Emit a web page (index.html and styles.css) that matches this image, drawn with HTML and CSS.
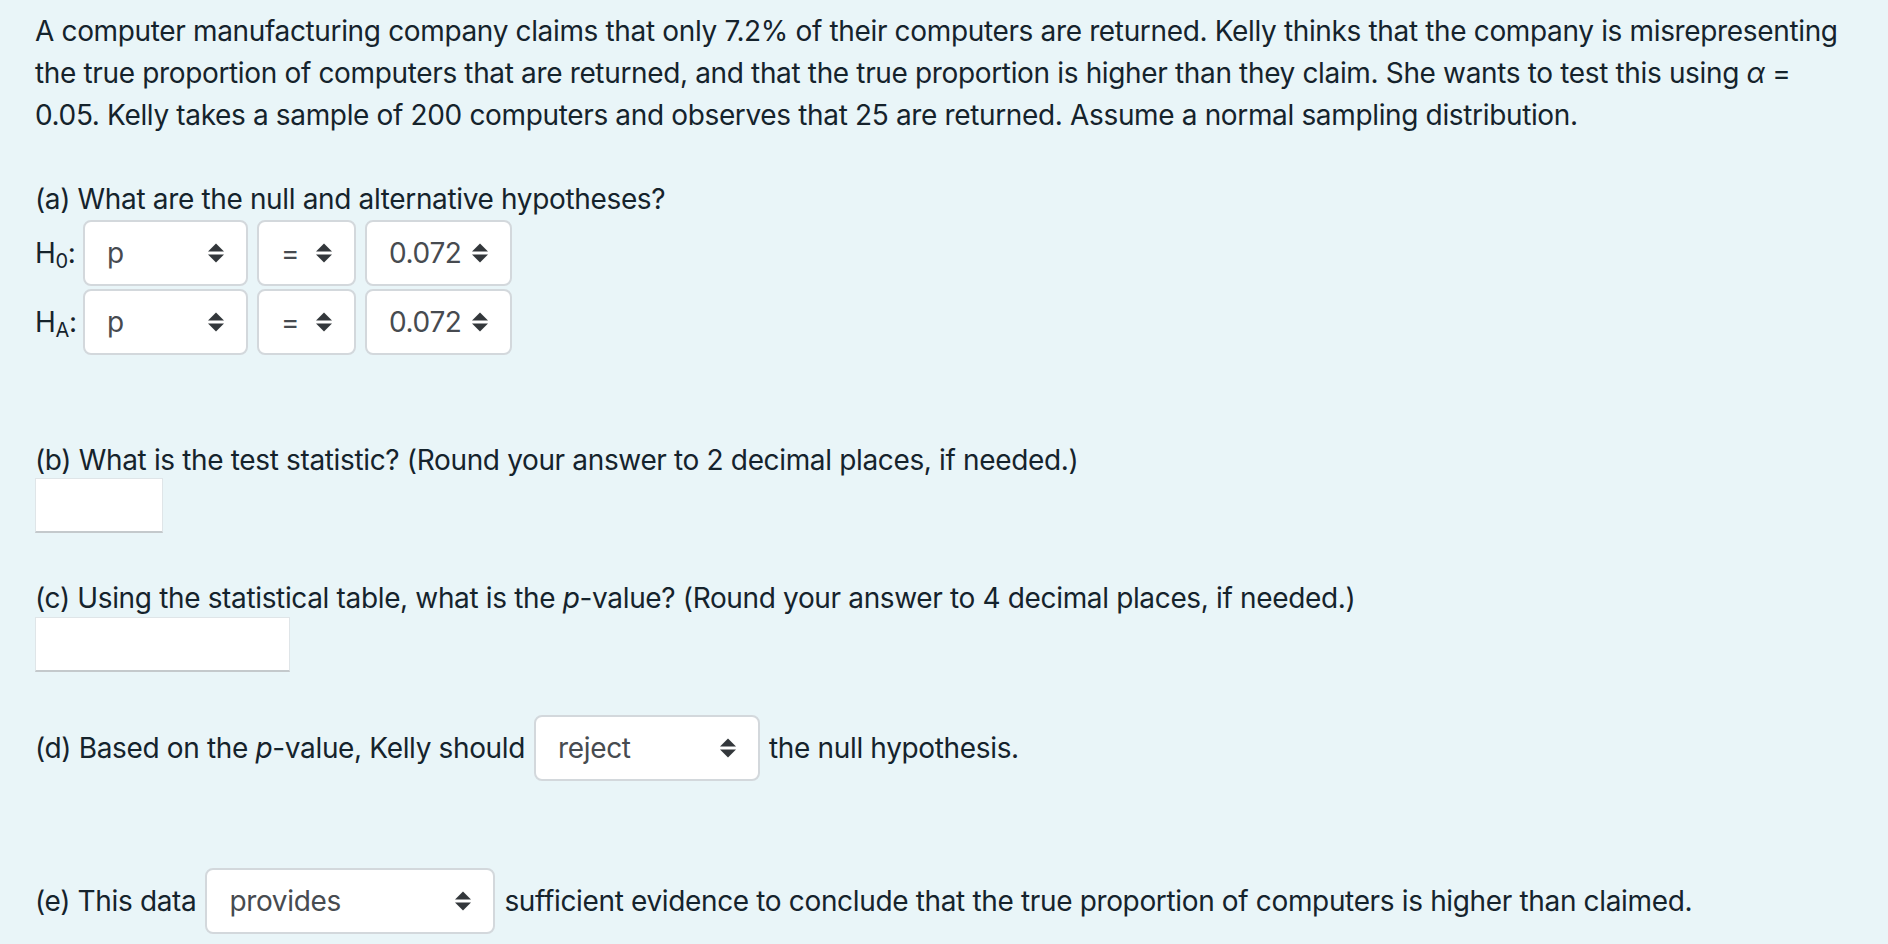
FILE: index.html
```html
<!DOCTYPE html>
<html lang="en">
<head>
<meta charset="utf-8">
<title>Hypothesis test question</title>
<link rel="stylesheet" href="styles.css">
</head>
<body>
<main class="page">
  <p class="intro">A computer manufacturing company claims that only 7.2% of their computers are returned. Kelly thinks that the company is misrepresenting<br>the true proportion of computers that are returned, and that the true proportion is higher than they claim. She wants to test this using <i class="alpha">α</i> =<br>0.05. Kelly takes a sample of 200 computers and observes that 25 are returned. Assume a normal sampling distribution.</p>

  <section class="part part-a">
    <p class="question">(a) What are the null and alternative hypotheses?</p>
    <div class="hyp-row">
      <span class="hyp-label">H<sub>0</sub>:</span>
      <div class="sel sel-var"><span class="sel-text">p</span><svg class="arrows" viewBox="0 0 16 20" width="16" height="20"><path d="M0 8.5 L8 0.5 L16 8.5 Z M0 11.5 L16 11.5 L8 19.5 Z"/></svg></div>
      <div class="sel sel-op"><span class="sel-text">=</span><svg class="arrows" viewBox="0 0 16 20" width="16" height="20"><path d="M0 8.5 L8 0.5 L16 8.5 Z M0 11.5 L16 11.5 L8 19.5 Z"/></svg></div>
      <div class="sel sel-val"><span class="sel-text">0.072</span><svg class="arrows" viewBox="0 0 16 20" width="16" height="20"><path d="M0 8.5 L8 0.5 L16 8.5 Z M0 11.5 L16 11.5 L8 19.5 Z"/></svg></div>
    </div>
    <div class="hyp-row">
      <span class="hyp-label">H<sub>A</sub>:</span>
      <div class="sel sel-var"><span class="sel-text">p</span><svg class="arrows" viewBox="0 0 16 20" width="16" height="20"><path d="M0 8.5 L8 0.5 L16 8.5 Z M0 11.5 L16 11.5 L8 19.5 Z"/></svg></div>
      <div class="sel sel-op"><span class="sel-text">=</span><svg class="arrows" viewBox="0 0 16 20" width="16" height="20"><path d="M0 8.5 L8 0.5 L16 8.5 Z M0 11.5 L16 11.5 L8 19.5 Z"/></svg></div>
      <div class="sel sel-val"><span class="sel-text">0.072</span><svg class="arrows" viewBox="0 0 16 20" width="16" height="20"><path d="M0 8.5 L8 0.5 L16 8.5 Z M0 11.5 L16 11.5 L8 19.5 Z"/></svg></div>
    </div>
  </section>

  <section class="part part-b">
    <p class="question">(b) What is the test statistic? (Round your answer to 2 decimal places, if needed.)</p>
    <div class="answer answer-b"></div>
  </section>

  <section class="part part-c">
    <p class="question">(c) Using the statistical table, what is the <i>p</i>-value? (Round your answer to 4 decimal places, if needed.)</p>
    <div class="answer answer-c"></div>
  </section>

  <section class="part part-d">
    <div class="inline-row">
      <span>(d) Based on the <i>p</i>-value, Kelly should</span>
      <div class="sel sel-d"><span class="sel-text">reject</span><svg class="arrows" viewBox="0 0 16 20" width="16" height="20"><path d="M0 8.5 L8 0.5 L16 8.5 Z M0 11.5 L16 11.5 L8 19.5 Z"/></svg></div>
      <span>the null hypothesis.</span>
    </div>
  </section>

  <section class="part part-e">
    <div class="inline-row">
      <span>(e) This data</span>
      <div class="sel sel-e"><span class="sel-text">provides</span><svg class="arrows" viewBox="0 0 16 20" width="16" height="20"><path d="M0 8.5 L8 0.5 L16 8.5 Z M0 11.5 L16 11.5 L8 19.5 Z"/></svg></div>
      <span>sufficient evidence to conclude that the true proportion of computers is higher than claimed.</span>
    </div>
  </section>
</main>
</body>
</html>
```

FILE: styles.css
```css
html, body {
  margin: 0;
  padding: 0;
  background: #e9f5f8;
}

body {
  font-family: Inter, "Noto Sans", "Liberation Sans", sans-serif;
  font-size: 28px;
  line-height: 42px;
  letter-spacing: -0.35px;
  color: #15232c;
}

.page {
  padding: 10px 35px 0 35px;
  width: 1860px;
  box-sizing: border-box;
}

p {
  margin: 0;
}

.intro {
  white-space: nowrap;
}

.alpha {
  font-style: italic;
}

.part-a {
  margin-top: 42px;
}

.hyp-row {
  display: flex;
  align-items: center;
  gap: 9px;
  margin-bottom: 3px;
}

.hyp-label {
  width: 39px;
}

.hyp-label sub {
  font-size: 20px;
  line-height: 0;
  vertical-align: -5px;
}

.sel {
  display: flex;
  align-items: center;
  justify-content: space-between;
  box-sizing: border-box;
  height: 66px;
  padding: 0 22px 0 22px;
  background: #ffffff;
  border: 2px solid #d3d8dc;
  border-radius: 8px;
  color: #474b50;
}

.arrows {
  fill: #33373b;
  flex: none;
}

.sel-var { width: 165px; }
.sel-op { width: 99px; }
.sel-val { width: 147px; }
.sel-d { width: 226px; }
.sel-e { width: 290px; }

.part-b {
  margin-top: 84px;
}

.answer {
  box-sizing: border-box;
  height: 55px;
  background: #ffffff;
  border: 1px solid #dfe5e8;
  border-bottom: 2px solid #c4c9cc;
}

.answer-b {
  width: 128px;
  margin-top: -3px;
}

.answer-c {
  width: 255px;
  margin-top: -2px;
}

.part-c {
  margin-top: 44px;
}

.part-d {
  margin-top: 43px;
}

.part-e {
  margin-top: 87px;
}

.inline-row {
  display: flex;
  align-items: center;
  gap: 9px;
  white-space: nowrap;
}
```
